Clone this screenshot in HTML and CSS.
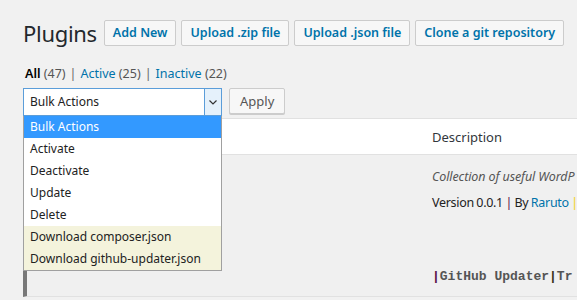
FILE: index.html
```html
<!DOCTYPE html>
<html lang="en">
<head>
  <meta charset="UTF-8">
  <title>Plugins</title>
  <link rel="stylesheet" href="styles.css">
</head>
<body>

  <div class="wrap">
    <div class="page-head">
      <h1>Plugins</h1>
      <a class="title-action" href="#">Add New</a>
      <a class="title-action" href="#">Upload .zip file</a>
      <a class="title-action" href="#">Upload .json file</a>
      <a class="title-action" href="#">Clone a git repository</a>
    </div>

    <ul class="subsubsub">
      <li class="current">All <span class="count">(47)</span></li>
      <li class="sep">|</li>
      <li><a href="#">Active <span class="count">(25)</span></a></li>
      <li class="sep">|</li>
      <li><a href="#">Inactive <span class="count">(22)</span></a></li>
    </ul>

    <div class="tablenav">
      <div class="select-wrap">
        <div class="select">
          <span>Bulk Actions</span>
          <span class="select-arrow">
            <svg width="8" height="5" viewBox="0 0 8 5"><path d="M0.5 0.5 L4 4 L7.5 0.5" fill="none" stroke="#333" stroke-width="1.2"/></svg>
          </span>
        </div>
        <ul class="dropdown">
          <li class="selected">Bulk Actions</li>
          <li>Activate</li>
          <li>Deactivate</li>
          <li>Update</li>
          <li>Delete</li>
          <li class="extra">Download composer.json</li>
          <li class="extra">Download github-updater.json</li>
        </ul>
      </div>
      <button class="apply">Apply</button>
    </div>

    <div class="plugins-table">
      <div class="table-head">
        <div class="col-plugin"></div>
        <div class="col-desc">Description</div>
      </div>
      <div class="plugin-row">
        <div class="col-plugin"></div>
        <div class="col-desc">
          <p class="desc-text">Collection of useful WordP</p>
          <p class="meta">Version 0.0.1 <span class="pipe-dark">|</span> By <a href="#">Raruto</a> <span class="pipe-yellow">|</span></p>
          <p class="code-line"><span class="pipe-dark">|</span>GitHub Updater<span class="pipe-mid">|</span>Tr</p>
        </div>
      </div>
    </div>
  </div>

</body>
</html>
```

FILE: styles.css
```css
body {
  font-family: 'Noto Sans', 'Open Sans', sans-serif;
  margin: 0;
  padding: 0;
  background-color: #f1f1f1;
  color: #32373c;
  overflow: hidden;
  height: 300px;
}

.wrap {
  padding-left: 23px;
}

.page-head {
  display: flex;
  align-items: center;
  gap: 5px;
  padding-top: 20px;
}

h1 {
  margin: 0 2px 0 0;
  font-size: 22px;
  font-weight: 400;
  letter-spacing: -0.3px;
  line-height: 26px;
  color: #23282d;
  flex-shrink: 0;
}

.title-action {
  display: block;
  flex-shrink: 0;
  white-space: nowrap;
  height: 26px;
  line-height: 24px;
  padding: 0 8px;
  border: 1px solid #ccc;
  border-radius: 2px;
  background-color: #f7f7f7;
  color: #0073aa;
  font-size: 12.5px;
  font-weight: 600;
  text-decoration: none;
  box-sizing: border-box;
}

.subsubsub {
  list-style: none;
  margin: 19px 0 0 2px;
  padding: 0;
  display: flex;
  gap: 4px;
  font-size: 12.5px;
  line-height: 18px;
  color: #555;
}

.subsubsub a {
  color: #0073aa;
  text-decoration: none;
}

.subsubsub .current {
  color: #000;
  font-weight: 600;
}

.subsubsub .count {
  color: #555;
  font-weight: 400;
}

.subsubsub .sep {
  color: #666;
}

.tablenav {
  display: flex;
  align-items: flex-start;
  gap: 7px;
  margin-top: 5px;
  height: 30px;
}

.select-wrap {
  position: relative;
  width: 199px;
}

.select {
  display: flex;
  height: 28px;
  border: 1px solid #5b9dd9;
  background: white;
  box-sizing: border-box;
  font-size: 12px;
  color: #222;
}

.select span:first-child {
  flex: 1;
  padding-left: 6px;
  line-height: 26px;
}

.select-arrow {
  width: 16px;
  border-left: 1px solid #5b9dd9;
  background-color: #e5f1fb;
  display: flex;
  align-items: center;
  justify-content: center;
}

.dropdown {
  position: absolute;
  top: 28px;
  left: 0;
  width: 199px;
  margin: 0;
  padding: 0;
  list-style: none;
  background: white;
  border: 1px solid #a0a0a0;
  border-top: none;
  box-sizing: border-box;
  z-index: 2;
  font-size: 12px;
  color: #222;
}

.dropdown li {
  height: 22px;
  line-height: 22px;
  padding-left: 6px;
}

.dropdown .selected {
  background-color: #3399ff;
  color: white;
}

.dropdown .extra {
  background-color: #f4f3dc;
}

.apply {
  height: 26px;
  padding: 0 10px;
  border: 1px solid #ccc;
  border-radius: 2px;
  background-color: #f7f7f7;
  box-shadow: 0 1px 0 #ccc;
  color: #555;
  font-family: inherit;
  font-size: 13px;
}

.table-head {
  display: flex;
  height: 37px;
  background: white;
  border-top: 1px solid #e1e1e1;
  border-bottom: 1px solid #e1e1e1;
  box-sizing: border-box;
  align-items: center;
  font-size: 13px;
}

.col-plugin {
  width: 409px;
  flex-shrink: 0;
}

.col-desc {
  white-space: nowrap;
}

.plugin-row {
  display: flex;
  height: 141px;
  border-left: 4px solid #787878;
  border-bottom: 1px solid #e1e1e1;
  background-color: #f0f0f0;
}

.plugin-row .col-plugin {
  width: 405px;
}

.plugin-row p {
  margin: 0;
}

.desc-text {
  font-style: italic;
  color: #555;
  font-size: 12.5px;
  letter-spacing: -0.1px;
  margin-top: 13px !important;
}

.meta {
  font-size: 12.5px;
  letter-spacing: -0.3px;
  word-spacing: -0.5px;
  color: #222;
  margin-top: 9px !important;
}

.meta a {
  color: #0073aa;
  text-decoration: none;
}

.pipe-dark {
  color: #5a1048;
}

.pipe-yellow {
  color: #f0d64a;
  font-weight: 600;
}

.pipe-mid {
  color: #3a3418;
}

.code-line {
  margin-top: 58px !important;
  font-family: 'Liberation Mono', monospace;
  font-weight: bold;
  font-size: 13px;
  color: #555;
}
```
